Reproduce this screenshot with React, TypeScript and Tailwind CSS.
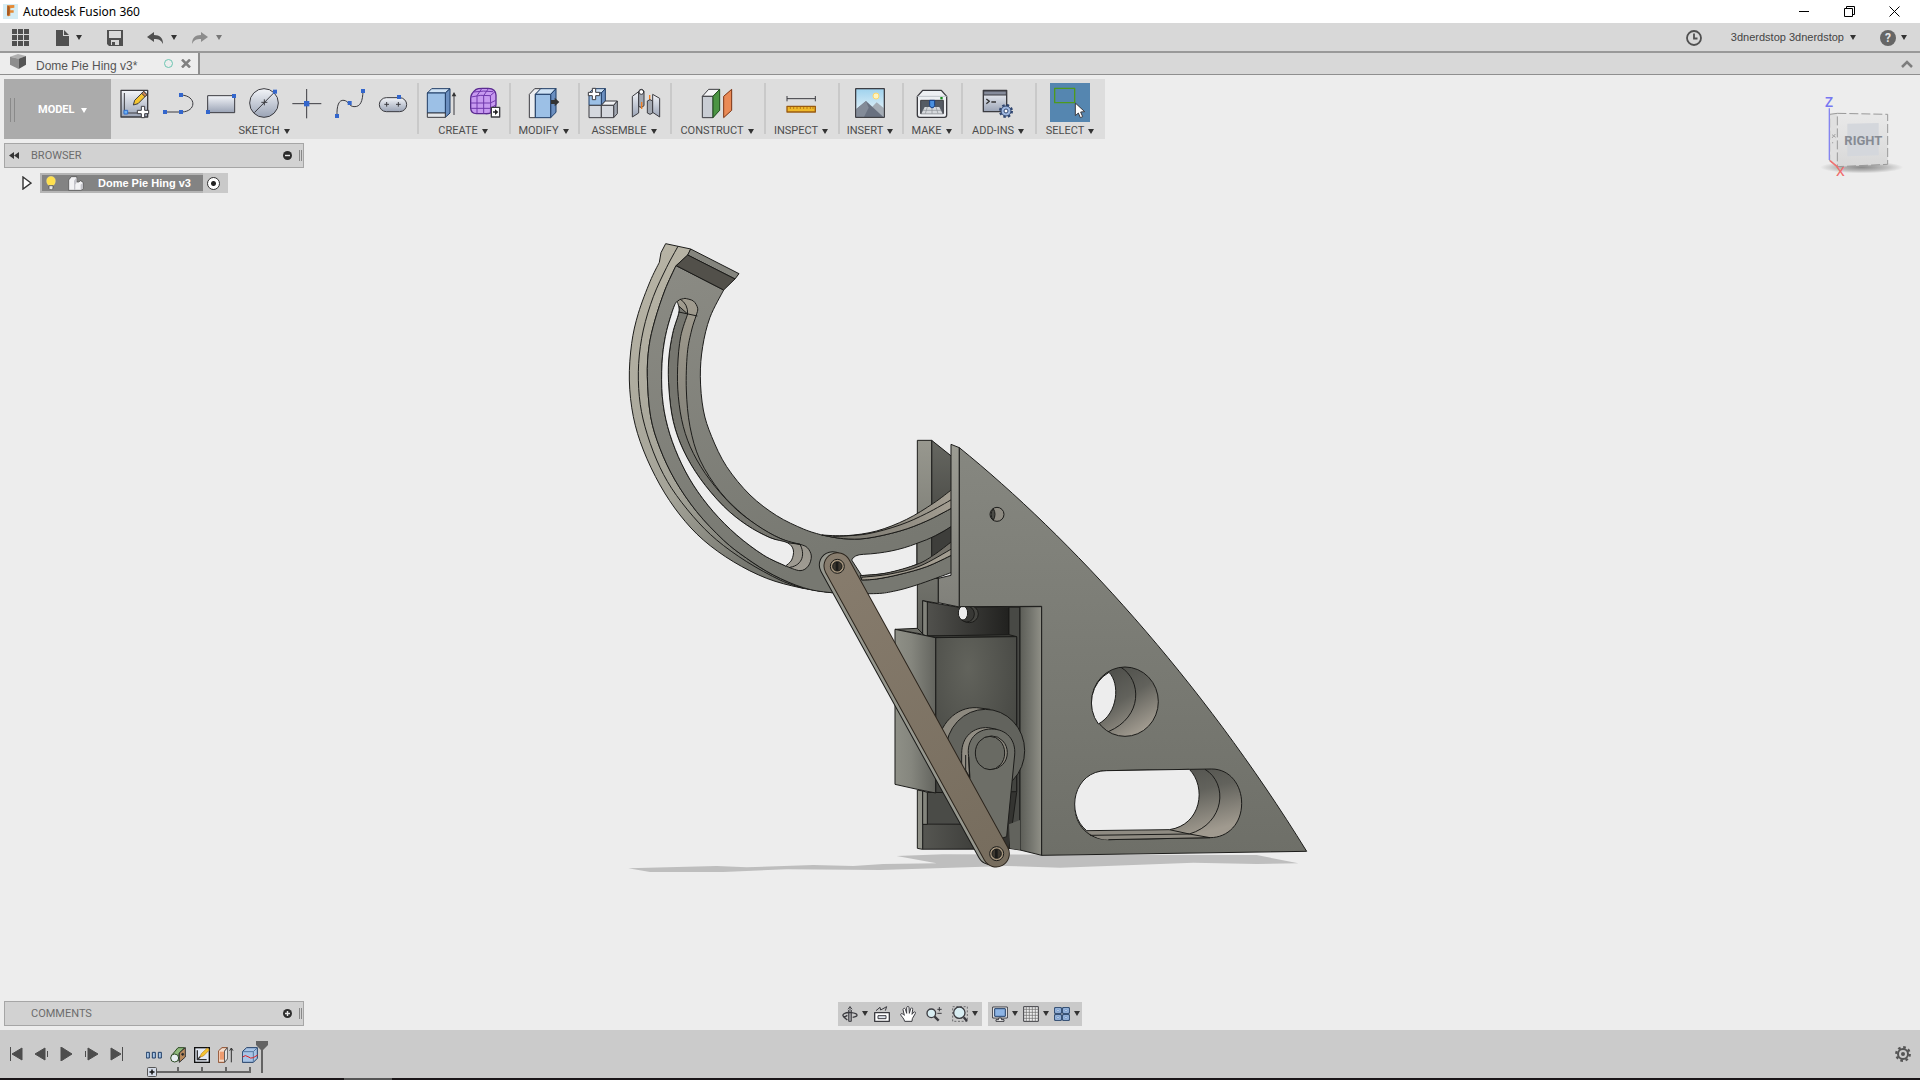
// Fusion 360 — MODEL workspace
import type { ReactNode } from "react"

type Pt = [number, number]

// smooth path through a list of points
function curve(pts: Pt[], start = "M") {
  let d = `${start}${pts[0][0]} ${pts[0][1]}`
  for (let i = 0; i < pts.length - 1; i++) {
    const p0 = pts[i - 1] ?? pts[i]
    const p1 = pts[i]
    const p2 = pts[i + 1]
    const p3 = pts[i + 2] ?? p2
    d += ` C${p1[0] + (p2[0] - p0[0]) / 6} ${p1[1] + (p2[1] - p0[1]) / 6} ${p2[0] - (p3[0] - p1[0]) / 6} ${p2[1] - (p3[1] - p1[1]) / 6} ${p2[0]} ${p2[1]}`
  }
  return d
}

const ringOuter: Pt[] = [[178, 97], [150, 155], [115, 250], [95, 340], [88, 450], [100, 560], [130, 660], [180, 765], [240, 855], [310, 930], [400, 995], [500, 1045], [600, 1073], [695, 1088]]
const ringMid: Pt[] = [[234, 49], [200, 112], [160, 200], [130, 300], [116, 400], [118, 500], [135, 590], [170, 690], [215, 775], [280, 860], [350, 930], [440, 995], [540, 1050], [610, 1075]]
const faceOuter: Pt[] = [[228, 107], [195, 180], [165, 270], [147, 350], [142, 440], [152, 560], [180, 655], [225, 750], [290, 845], [370, 930], [440, 985], [520, 1035], [610, 1073], [695, 1088], [820, 1091], [880, 1084], [950, 1065], [1056, 1027]]
const faceInner: Pt[] = [[665, 915], [610, 897], [530, 857], [450, 795], [380, 710], [335, 620], [310, 540], [301, 440], [308, 350], [330, 262], [371, 180]]
const slotOuter: Pt[] = [[255, 205], [232, 214], [215, 250], [196, 320], [186, 400], [187, 500], [203, 590], [235, 680], [280, 765], [340, 845], [410, 915], [490, 975], [557, 1008]]
const slotInner: Pt[] = [[557, 1008], [600, 1022], [625, 1008], [634, 978], [622, 953], [600, 943], [565, 935], [500, 905], [430, 855], [360, 785], [300, 690], [270, 590], [259, 480], [262, 370], [275, 300], [288, 258], [293, 235], [280, 213], [255, 205]]
const slotMid: Pt[] = [[263, 252], [242, 320], [233, 410], [235, 500], [250, 590], [280, 670], [330, 750], [400, 830], [470, 885], [540, 925], [600, 943]]
const gapLeft: Pt[] = [[236, 228], [229, 216], [215, 250], [196, 320], [186, 400], [187, 500], [203, 590], [235, 680], [280, 765], [340, 845], [410, 915], [490, 975], [557, 1008]]
const gapRight: Pt[] = [[557, 1008], [575, 990], [580, 960], [562, 938], [510, 923], [440, 885], [370, 828], [300, 745], [250, 660], [220, 575], [207, 480], [206, 390], [218, 310], [236, 250], [236, 228]]
const topOuter: Pt[] = [[665, 915], [740, 917], [830, 903], [920, 868], [1000, 820], [1056, 778]]
const topFace: Pt[] = [[1056, 834], [980, 873], [900, 903], [800, 925], [730, 926], [665, 915]]

function Model() {
  return (
    <svg className="pointer-events-none absolute inset-0 h-full w-full" viewBox="0 75 1920 955" aria-label="Dome Pie Hing model" role="img">
      <defs>
        <linearGradient id="plate" x1="0" y1="0" x2="0" y2="1"><stop offset="0" stopColor="#868780" /><stop offset="1" stopColor="#6e6f68" /></linearGradient>
        <linearGradient id="edge" x1="0" y1="0" x2="0" y2="1"><stop offset="0" stopColor="#9c9c93" /><stop offset="1" stopColor="#80807a" /></linearGradient>
        <linearGradient id="post" x1="0" y1="0" x2="0" y2="1"><stop offset="0" stopColor="#98988f" /><stop offset="1" stopColor="#62635d" /></linearGradient>
        <linearGradient id="back" x1="0" y1="0" x2="0" y2="1"><stop offset="0" stopColor="#666761" /><stop offset="1" stopColor="#353532" /></linearGradient>
        <linearGradient id="column" x1="0" y1="0" x2="1" y2="0"><stop offset="0" stopColor="#5c5d57" /><stop offset="0.5" stopColor="#74756e" /><stop offset="1" stopColor="#909087" /></linearGradient>
        <linearGradient id="recess" x1="0" y1="0" x2="1" y2="0"><stop offset="0" stopColor="#51514d" /><stop offset="1" stopColor="#21211f" /></linearGradient>
        <linearGradient id="servo" x1="0" y1="0" x2="1" y2="0"><stop offset="0" stopColor="#8f9087" /><stop offset="0.4" stopColor="#85867e" /><stop offset="1" stopColor="#63645e" /></linearGradient>
        <radialGradient id="servoFace" cx="0.4" cy="0.2" r="0.8"><stop offset="0" stopColor="#62635c" /><stop offset="1" stopColor="#434440" /></radialGradient>
        <linearGradient id="bore" x1="0" y1="0" x2="0.6" y2="1"><stop offset="0" stopColor="#474844" /><stop offset="0.55" stopColor="#62625c" /><stop offset="1" stopColor="#a09a8f" /></linearGradient>
        <linearGradient id="face" x1="0" y1="0" x2="0.3" y2="1"><stop offset="0" stopColor="#8b8b84" /><stop offset="1" stopColor="#777871" /></linearGradient>
        <linearGradient id="rim" x1="0" y1="0" x2="0.4" y2="1"><stop offset="0" stopColor="#b9b5a6" /><stop offset="0.7" stopColor="#a4a398" /><stop offset="1" stopColor="#75766f" /></linearGradient>
        <linearGradient id="wall" x1="0" y1="0" x2="0" y2="1"><stop offset="0" stopColor="#a19c8f" /><stop offset="0.6" stopColor="#7e7d75" /><stop offset="1" stopColor="#a09c93" /></linearGradient>
        <linearGradient id="upper" x1="0" y1="0" x2="1" y2="0"><stop offset="0" stopColor="#6f6e67" /><stop offset="1" stopColor="#a49e92" /></linearGradient>
        <linearGradient id="link" gradientUnits="userSpaceOnUse" x1="700" y1="60" x2="1188" y2="940"><stop offset="0" stopColor="#877c6d" /><stop offset="1" stopColor="#776d5e" /></linearGradient>
      </defs>

      {/* mount, servo pocket */}
      <g transform="translate(860 420) scale(0.33333)" stroke="#1b1b19" strokeWidth="3" strokeLinejoin="round">
        <path stroke="none" fill="#bebebe" d="M-695 1345 L-430 1338 L-340 1342 L-140 1335 L-20 1338 L70 1332 L230 1330 L110 1308 L250 1303 L1190 1305 L1315 1330 L1190 1332 L1000 1328 L600 1343 L440 1338 L60 1350 L-220 1348 L-410 1356 L-630 1356 Z" />
        <path fill="url(#back)" d="M215 61 L275 109 V400 L235 475 H215 Z" />
        <path fill="url(#post)" d="M172 61 H215 V475 H235 V550 L188 542 V640 L172 634 Z" />
        <path fill="url(#recess)" d="M202 546 L298 562 H447 V648 H202 Z" />
        <path fill="#82837b" d="M188 542 L202 546 V648 L188 644 Z" />
        <ellipse cx="328" cy="582" rx="27" ry="26" fill="#454541" />
        <ellipse cx="320" cy="582" rx="23" ry="24" fill="#383835" />
        <ellipse cx="309" cy="579" rx="14" ry="21" fill="#ededed" />
        <path fill="#484945" d="M447 562 H480 V1290 L447 1285 Z" />
        <path fill="#343431" d="M202 648 L225 652 H470 V1117 L447 1285 L345 1287 H188 V1117 H227 Z" />
        <path fill="#3c3d39" d="M202 648 L447 644 L470 650 L227 653 Z" />
        <path fill="url(#servoFace)" d="M227 653 L470 650 V1115 L227 1119 Z" />
        <path fill="#4a4b47" d="M202 1117 L350 1119 V1213 H202 Z" />
        <path fill="#5a5b56" d="M188 1213 H350 V1287 H188 Z" />
        <path fill="url(#recess)" opacity="0.5" stroke="none" d="M188 1213 H350 V1287 H188 Z" />
        <path fill="#92938a" d="M172 1110 L188 1113 V1288 L172 1285 Z" />
        <path fill="#84857d" d="M188 1113 L202 1117 V1213 H188 Z" />
        <path fill="#6c6d66" d="M105 628 L172 625 L190 643 Z" />
        <path fill="url(#servo)" d="M105 628 L188 645 L227 653 V1119 L172 1108 L105 1093 Z" />
        <path fill="url(#column)" d="M480 560 H545 V1306 L480 1290 Z" />
        <path fill="#62635d" d="M447 1213 L480 1200 V1290 L450 1285 Z" stroke="none" />
      </g>

      {/* hinge ring */}
      <g transform="translate(600 230) scale(0.33333)" fill="none" stroke="#1b1b19" strokeWidth="3" strokeLinejoin="round">
        <path fill="url(#rim)" d={`M272 57 L197 41 L183 68 ${curve(ringOuter, "L")} ${curve([...faceOuter.slice(0, 14)].reverse(), "L")} L266 73 Z`} />
        <path d={curve(ringMid)} />
        <path fill="url(#face)" d={`${curve(faceOuter)} L1056 834 ${curve(topFace, "L")} ${curve(faceInner, "L")} Z`} />
        <path fill="url(#upper)" d={`${curve(topOuter)} ${curve(topFace, "L")} Z`} />
        <path d={curve([[1056, 808], [980, 850], [900, 885], [800, 912], [700, 919]])} />
        <path fill="#85857e" d="M272 57 L417 131 L405 147 L263 75 Z" />
        <path fill="#52504a" d="M263 75 L405 147 L371 180 L229 107 Z" />
        <path fill="url(#wall)" d={`${curve(slotOuter)} ${curve(slotInner, "L")} Z`} />
        <path fill="#76766f" d={`${curve(slotMid)} ${curve(gapRight.slice(3), "L")} Z`} />
        <path fill="#ededed" d={`${curve(gapLeft)} ${curve(gapRight, "L")} Z`} />
        <path d="M236 246 L292 258 M240 207 Q264 222 263 252 M600 943 C615 970 610 1005 570 1012" />

        {/* slot past the linkage pin */}
        <path fill="#ededed" d="M755 990 Q762 974 790 973 C850 970 900 960 951 940 V1003 C900 1025 850 1034 785 1037 Z" />
        <path stroke="none" fill="#73746d" d="M951 940 L995 922 V985 L951 1003 Z" />
        <path stroke="none" fill="#3e3e3b" d="M995 922 L1056 888 V940 L995 980 Z" />
        <path d="M951 940 V1003 M995 922 V980 M951 940 Q1010 920 1056 888" />
        <path fill="#75726a" d={`${curve([[780, 1037], [860, 1029], [951, 1003], [1000, 976], [1056, 934]])} ${curve([[1056, 975], [980, 1010], [900, 1033], [830, 1047], [785, 1050]], "L")} Z`} />
        <path fill="#a29c90" d={`${curve([[785, 1042], [870, 1032], [960, 1008], [1056, 956]])} ${curve([[1056, 975], [980, 1010], [900, 1033], [830, 1047], [785, 1050]], "L")} Z`} />
      </g>

      {/* front plate */}
      <g transform="translate(860 420) scale(0.33333)" stroke="#1b1b19" strokeWidth="3" strokeLinejoin="round">
        <path fill="url(#edge)" d="M273 73 L298 83 V561 L235 548 V475 L273 466 Z" />
        <path fill="url(#plate)" d="M298 83 C630 352 1020 775 1340 1294 L545 1306 V559 L298 560 Z" />
        <circle cx="411" cy="283" r="21" fill="#8d8a81" />
        <path fill="#4b4b46" d="M400 266 Q410 282 400 301 Q386 283 400 266 Z" />
        <ellipse cx="795" cy="845" rx="100" ry="104" fill="url(#bore)" />
        <path fill="none" d="M783 742 C845 780 850 890 745 935" />
        <path fill="#ededed" d="M747 757 C780 790 775 880 715 912 A100 104 0 0 1 747 757 Z" />
        <path fill="url(#bore)" d="M740 1052 L1055 1047 C1110 1047 1145 1095 1145 1150 C1145 1210 1105 1253 1050 1253 L745 1259 C685 1259 645 1215 645 1160 C645 1095 690 1052 740 1052 Z" />
        <path fill="#8f8b82" stroke="none" d="M680 1232 L925 1229 L1050 1253 L745 1259 Q710 1259 680 1232 Z" />
        <path fill="none" d="M1035 1048 C1105 1090 1095 1210 988 1242 M690 1246 L988 1242 L1050 1253 M928 1229 L988 1242 M745 1259 L1050 1253" />
        <path fill="#ededed" d="M740 1052 L988 1048 C1040 1100 1025 1215 928 1229 L680 1232 C615 1180 640 1052 740 1052 Z" />
      </g>

      {/* servo horn and linkage */}
      <g transform="translate(600 540) scale(0.33333)" fill="none" stroke="#1b1b19" strokeWidth="3" strokeLinejoin="round">
        <path fill="#8d897f" d="M1010 630 C1015 550 1070 500 1130 503 L1170 508 L1100 750 H1060 Z" />
        <ellipse cx="1156" cy="632" rx="118" ry="124" fill="#62635d" />
        <path fill="#918d83" d="M1085 640 C1085 590 1120 560 1165 563 L1190 568 L1110 710 L1085 690 Z" />
        <path fill="#6d6e67" d="M1106 650 C1098 600 1130 567 1174 567 C1220 567 1248 600 1244 645 L1220 890 L1190 900 L1110 750 Z" />
        <path d="M1097 645 V690 L1108 710 M1106 650 L1110 715" />
        <ellipse cx="1175" cy="638" rx="47" ry="50" fill="#8d897f" />
        <ellipse cx="1170" cy="639" rx="44" ry="50" fill="#696a63" />
        <path strokeWidth="83" strokeLinecap="round" d="M698 75 L1172 934" />
        <path strokeWidth="77" strokeLinecap="round" stroke="#96978e" d="M698 75 L1172 934" />
        <path strokeWidth="83" strokeLinecap="round" stroke="#2b241c" d="M712 78 L1188 941" />
        <path strokeWidth="77" strokeLinecap="round" stroke="url(#link)" d="M712 78 L1188 941" />
        <circle cx="712" cy="79" r="21" fill="#a8977f" />
        <circle cx="712" cy="79" r="14" fill="#3c372f" />
        <path strokeWidth="8" d="M711 66 V92" />
        <circle cx="1190" cy="941" r="21" fill="#a8977f" />
        <circle cx="1190" cy="941" r="14" fill="#3c372f" />
        <path strokeWidth="8" d="M1189 928 V954" />
      </g>
    </svg>
  )
}

function ViewCube() {
  return (
    <svg className="mt-4 mr-4 h-[90px] w-[84px] shrink-0" viewBox="480 273 252 270" aria-label="View cube: right" role="img">
      <defs>
        <radialGradient id="cubeShadow"><stop offset="0" stopColor="#8a8a8a" /><stop offset="0.6" stopColor="#bdbdbd" /><stop offset="1" stopColor="#ededed" /></radialGradient>
        <linearGradient id="cubeFace" x1="0" y1="0" x2="0" y2="1"><stop offset="0" stopColor="#e9e9e9" /><stop offset="1" stopColor="#d8d8d8" /></linearGradient>
      </defs>
      <ellipse cx="605" cy="502" rx="125" ry="18" fill="url(#cubeShadow)" />
      <path d="M509 343 L532 340 V500 L509 482 Z" fill="#e0e0e0" />
      <path d="M532 340 L683 343 V493 L532 500 Z" fill="url(#cubeFace)" />
      <path d="M562 371 L656 369 V466 L562 469 Z" fill="#d4d7dc" />
      <path d="M532 340 L683 343 V493 L532 500 Z M532 340 L509 343 V482 L532 500" fill="none" stroke="#999" strokeWidth="3" strokeDasharray="27 9" />
      <path d="M508 325 V480" stroke="#8585f0" strokeWidth="4" />
      <path d="M510 482 L534 502" stroke="#f07070" strokeWidth="5" />
      <path d="M516 404 L527 412 M516 414 L526 402 M518 426 V430" stroke="#a5a5a5" strokeWidth="3" />
      <text x="610" y="435" textAnchor="middle" className="fill-[#868b93] font-['Roboto',sans-serif] text-[39px] font-bold">RIGHT</text>
      <text x="507" y="321" textAnchor="middle" className="fill-[#7676f2] font-['Open_Sans',sans-serif] text-[42px] font-semibold">Z</text>
      <text x="541" y="528" textAnchor="middle" className="fill-[#ef6c6c] font-['Open_Sans',sans-serif] text-[40px] font-semibold">X</text>
    </svg>
  )
}

function Caret({ className = "text-[#333]" }: { className?: string }) {
  return <svg className={`h-[5px] w-[6px] shrink-0 ${className}`} viewBox="0 0 6 5"><path d="M0 0 H6 L3 5 Z" fill="currentColor" /></svg>
}

// 32px tool artwork on a 96 unit grid
function Art({ children }: { children: ReactNode }) {
  return <svg className="h-8 w-8" viewBox="0 0 96 96" fill="none" stroke="#3b3b40" strokeWidth="3" strokeLinejoin="round">{children}</svg>
}

function Dot({ x, y }: { x: number; y: number }) {
  return <rect x={x - 6} y={y - 6} width="12" height="12" fill="#3366cc" stroke="none" />
}

const sketchTools = [
  { name: "Create Sketch", art: <><rect x="6" y="10" width="80" height="80" fill="url(#steel)" strokeWidth="4" /><path d="M16 18 V78 H60" /><rect x="15" y="70" width="11" height="11" fill="#6fb2f0" stroke="#2e6fd0" /><path d="M43 54 L47 40 L74 13 L84 23 L57 50 Z" fill="#f5c531" /><path d="M68 19 L74 13 L84 23 L78 29 Z" fill="#c98658" /><path d="M67 58 H77 V70 H89 V80 H77 V92 H67 V80 H55 V70 H67 Z" fill="#fff" /></> },
  { name: "Line", art: <><path d="M9 75 H60 C104 73 104 26 57 24" /><Dot x={9} y={75} /><Dot x={57} y={75} /><Dot x={57} y={24} /></> },
  { name: "Rectangle", art: <><rect x="8" y="26" width="81" height="51" fill="url(#steel)" /><Dot x={87} y={27} /><Dot x={9} y={75} /></> },
  { name: "Circle", art: <><circle cx="48" cy="48" r="43" fill="url(#steel)" /><path d="M19 77 L81 14 M40 46 H58 M49 37 V55" /><Dot x={81} y={14} /></> },
  { name: "Point", art: <><path d="M4 50 H91 M47 6 V94" /><rect x="39" y="42" width="16" height="16" fill="#3366cc" stroke="none" /></> },
  { name: "Spline", art: <><path d="M9 87 C8 56 14 38 30 40 C44 42 44 58 60 59 C80 60 86 42 87 12" /><Dot x={9} y={87} /><Dot x={47} y={48} /><Dot x={87} y={12} /></> },
  { name: "Slot", art: <><rect x="7" y="32" width="82" height="42" rx="21" fill="url(#steel)" /><path d="M22 52 H36 M29 45 V59 M57 52 H71 M64 45 V59" /><Dot x={66} y={30} /></> },
]

const createTools = [
  { name: "Extrude", art: <><path d="M4 18 L17 5 H72 L58 18 Z" fill="#cfe2f4" stroke="#1f3d66" /><path d="M58 18 L72 5 V78 L58 91 Z" fill="#6b8fc0" stroke="#1f3d66" /><path d="M4 18 H58 V78 H4 Z" fill="#9cc0e6" stroke="#1f3d66" /><path d="M4 78 H58 V91 H4 Z" fill="#e3e6ea" /><path d="M84 84 V20" /><path d="M77 28 L84 15 L91 28 Z" fill="#333" stroke="none" /></> },
  { name: "Create Form", art: <><path d="M5 36 Q4 20 20 8 Q26 4 40 4 H58 Q80 5 81 24 V52 Q80 66 68 76 Q62 81 48 80 H22 Q6 80 5 64 Z" fill="#c79af0" stroke="#5a2a90" strokeWidth="4" /><path d="M6 30 Q36 22 64 26 Q66 50 64 78 M14 15 Q45 10 72 14 M6 48 H64 L80 40 M6 64 H64 L80 54 M24 26 V79 M44 26 V80 M24 26 L38 5 M44 26 L58 5 M64 26 L78 14" stroke="#7038ad" /><rect x="67" y="61" width="25" height="29" fill="#fff" strokeWidth="4" /><path d="M72 75 H80" strokeWidth="5" /><path d="M78 67 L88 75 L78 84 Z" fill="#222" stroke="none" /></> },
]

const modifyTools = [
  { name: "Press Pull", art: <><path d="M4 22 L20 5 H40 L22 22 V92 H4 Z" fill="#eceef1" /><path d="M22 22 L38 5 H84 L68 22 Z" fill="#cfe2f4" stroke="#1f3d66" /><path d="M68 22 L84 5 V76 L68 92 Z" fill="#6b8fc0" stroke="#1f3d66" /><path d="M22 22 H68 V92 H22 Z" fill="#9cc0e6" stroke="#1f3d66" /><path d="M69 39 H80 V32 L94 45 L80 58 V51 H69 Z" fill="#333" stroke="none" /></> },
]

const assembleTools = [
  { name: "New Component", art: <><path d="M6 18 L20 5 H55 L43 18 Z" fill="#cfe2f4" stroke="#1f3d66" /><path d="M43 18 L55 5 V42 L43 55 Z" fill="#6b8fc0" stroke="#1f3d66" /><path d="M6 18 H43 V55 H6 Z" fill="#9cc0e6" stroke="#1f3d66" /><path d="M6 55 H43 V92 H6 Z" fill="#d5d8de" /><path d="M43 55 L55 42 H91 L80 55 Z" fill="#f2f3f5" /><path d="M80 55 L91 42 V80 L80 92 Z" fill="#a2a8b2" /><path d="M43 55 H80 V92 H43 Z" fill="#d5d8de" /><path d="M16 4 H26 V16 H38 V26 H26 V38 H16 V26 H4 V16 H16 Z" fill="#fff" /></> },
  { name: "Joint", art: <><path d="M7 28 L26 14 V78 L7 90 Z" fill="url(#steel)" /><path d="M26 12 Q34 2 42 12 V56 Q34 66 26 58 Z" fill="#a4a9b2" /><circle cx="34" cy="15" r="7" fill="#fff" /><path d="M35 45 V66 M59 24 V46" stroke="#f07e20" strokeWidth="4" /><path d="M52 42 Q60 34 68 42 V78 Q60 86 52 78 Z" fill="#a4a9b2" /><path d="M68 22 L89 34 V90 L68 76 Z" fill="url(#steel)" /></> },
]

const constructTools = [
  { name: "Offset Plane", art: <><path d="M4 28 L23 7 H56 L36 28 Z" fill="#f4f4f6" /><path d="M4 28 H36 V92 H4 Z" fill="#c9cdd4" /><path d="M36 28 L56 7 V70 L36 92 Z" fill="#4b9443" stroke="#1d4d1a" /><path d="M68 28 L92 7 V70 L68 92 Z" fill="#ea8a56" stroke="#7c3413" /></> },
]

const inspectTools = [
  { name: "Measure", art: <><path d="M6 35 H91 M6 27 V43 M91 27 V43" /><rect x="6" y="58" width="85" height="17" fill="#efb929" stroke="#9a5b10" strokeWidth="4" /><path d="M16 58 V66 M26 58 V66 M36 58 V66 M46 58 V66 M56 58 V66 M66 58 V66 M76 58 V66 M84 58 V66" stroke="#9a5b10" strokeWidth="2" /></> },
]

const insertTools = [
  { name: "Insert Image", art: <><rect x="5" y="5" width="86" height="86" fill="url(#sky)" /><circle cx="66" cy="27" r="9" fill="#fff4bf" stroke="#ffd76b" /><path d="M46 68 L68 46 L90 64 V90 H46 Z" fill="#a4acb5" stroke="none" /><path d="M7 66 L36 42 L88 90 H7 Z" fill="#697180" stroke="none" /><path d="M7 66 L36 42 L44 62 L30 90 H7 Z" fill="#838b98" stroke="none" /><rect x="5" y="5" width="86" height="86" /></> },
]

const makeTools = [
  { name: "3D Print", art: <><path d="M4 28 L20 10 H76 L92 28 V84 Q92 91 85 91 H11 Q4 91 4 84 Z" fill="#eef0f3" strokeWidth="4" /><path d="M4 28 H92" stroke="#c0c4ca" /><rect x="14" y="40" width="68" height="40" fill="#555b64" /><path d="M26 60 H70 L80 80 H16 Z" fill="#d6d9dd" stroke="none" /><path d="M34 60 L28 80 M48 60 V80 M60 60 L66 80 M20 70 H76" stroke="#8c9096" strokeWidth="2" /><path d="M41 40 H56 V56 L52 62 H45 L41 56 Z" fill="#4a90e0" stroke="#163f86" /><rect x="73" y="30" width="7" height="7" fill="#128a1b" stroke="none" /></> },
]

const addinTools = [
  { name: "Scripts and Add-Ins", art: <><rect x="4" y="10" width="70" height="64" fill="url(#steel)" strokeWidth="4" /><path d="M5 12 H73 V24 H5 Z" fill="#858b9b" /><path d="M13 36 L22 43 L13 50 M28 45 H42" stroke="#333" strokeWidth="4" /><circle cx="72" cy="72" r="17" stroke="#2f456f" strokeWidth="8" strokeDasharray="7 6.4" /><circle cx="72" cy="72" r="15" fill="#9fb8e0" stroke="#2f456f" /><circle cx="72" cy="72" r="6" fill="#fff" stroke="#2f456f" /></> },
]

const selectTools = [
  { name: "Select", active: true, art: <><path d="M2 4 H62 V47 H2 Z" stroke="#4e9a1d" strokeWidth="4" /><path d="M64 48 V86 L73 78 L79 92 L86 89 L80 75 L92 74 Z" fill="#fff" /></> },
]

type Tool = { name: string; art: ReactNode; active?: boolean }

const groups: { label: string; tools: Tool[]; width: string }[] = [
  { label: "SKETCH", tools: sketchTools, width: "w-[306px]" },
  { label: "CREATE", tools: createTools, width: "w-[92px]" },
  { label: "MODIFY", tools: modifyTools, width: "w-[69px]" },
  { label: "ASSEMBLE", tools: assembleTools, width: "w-[92px]" },
  { label: "CONSTRUCT", tools: constructTools, width: "w-[94px]" },
  { label: "INSPECT", tools: inspectTools, width: "w-[74px]" },
  { label: "INSERT", tools: insertTools, width: "w-[64px]" },
  { label: "MAKE", tools: makeTools, width: "w-[59px]" },
  { label: "ADD-INS", tools: addinTools, width: "w-[74px]" },
  { label: "SELECT", tools: selectTools, width: "w-[70px]" },
]

function Toolbar() {
  return (
    <div className="flex h-[60px] w-max bg-[#dddddd]">
      <svg className="absolute h-0 w-0" aria-hidden="true">
        <defs>
          <linearGradient id="steel" x1="0" y1="0" x2="0" y2="1"><stop offset="0" stopColor="#f3f5f9" /><stop offset="1" stopColor="#9aa3b5" /></linearGradient>
          <linearGradient id="sky" x1="0" y1="0" x2="0" y2="1"><stop offset="0" stopColor="#9fd2ee" /><stop offset="1" stopColor="#f2f9fb" /></linearGradient>
        </defs>
      </svg>
      <button type="button" className="flex w-[107px] items-center bg-[#ababab] pt-0.5 pl-1.5 text-[11px] font-bold text-white">
        <span className="h-6 w-[5px] border-x border-[#8a8a8a]" />
        <span className="mr-1.5 ml-[23px]">MODEL</span>
        <Caret className="text-white" />
      </button>
      {groups.map((g, i) => (
        <div key={g.label} className={`flex flex-col items-center pt-1 ${g.width}`}>
          <div className="flex w-full items-start">
            <div className="flex flex-1 justify-center">
              {g.tools.map(t => (
                <button key={t.name} type="button" aria-label={t.name} className={`flex h-[39px] items-center justify-center ${t.active ? "w-10 bg-[#5586b0]" : "w-[43px]"}`}>
                  <Art>{t.art}</Art>
                </button>
              ))}
            </div>
            {i < groups.length - 1 && <span className="-mr-0.5 -mb-4 h-[51px] w-0.5 bg-[#c9c9c9]" />}
          </div>
          <button type="button" className="flex h-[17px] items-center gap-1 pt-px text-[11px] leading-4 text-[#4c4c4c]">
            {g.label}
            <Caret />
          </button>
        </div>
      ))}
    </div>
  )
}

function SidePanel({ title, open }: { title: string; open: boolean }) {
  return (
    <div className="flex h-[25px] w-[300px] items-center border border-[#a6a6a6] bg-[#d2d2d2] text-[11px] text-[#6c6c6c]">
      <span className="flex w-[26px] pl-1">
        {open && <svg className="h-[7px] w-[10px]" viewBox="0 0 10 7"><path d="M5 0 V7 L0 3.5 Z M10 0 V7 L5 3.5 Z" fill="#333" /></svg>}
      </span>
      <h2 className="flex-1 pt-0.5">{title}</h2>
      <button type="button" aria-label={open ? `Collapse ${title}` : `Expand ${title}`}>
        <svg className="h-[9px] w-[9px]" viewBox="0 0 9 9"><circle cx="4.5" cy="4.5" r="4.5" fill="#2d2d2d" /><path d={open ? "M2 4.5 H7" : "M2 4.5 H7 M4.5 2 V7"} stroke="#e8e8e8" strokeWidth="1.4" /></svg>
      </button>
      <span className="mr-px ml-[7px] h-[11px] w-[3px] border-x border-[#888]" />
    </div>
  )
}

const playback = [
  { name: "Go to start", d: "M0.5 0 V14 M12 1 V13 L2 7 Z" },
  { name: "Step back", d: "M10 1 V13 L0 7 Z M12.5 4 V10" },
  { name: "Play", d: "M1 0 L12 7 L1 14 Z" },
  { name: "Step forward", d: "M0.5 4 V10 M3 1 L13 7 L3 13 Z" },
  { name: "Go to end", d: "M1 1 L11 7 L1 13 Z M12.5 0 V14" },
]

const features = [
  { name: "Component group", art: <path d="M1 16 H10 V33 H1 Z M19 16 H28 V33 H19 Z M37 16 H46 V33 H37 Z" fill="#a9c6e6" stroke="#1f3d66" /> },
  { name: "Combine", art: <><path d="M4 26 L24 2 H44 L28 18 L24 42 Z" fill="#8fb97c" stroke="#2c4a24" /><path d="M28 18 L46 2 V30 L28 46 Z" fill="#b98a5c" /><circle cx="14" cy="33" r="12" fill="#e8eef2" stroke="#2c4a24" /><circle cx="38" cy="22" r="3" fill="#222" /></> },
  { name: "Sketch", art: <><rect x="2" y="2" width="44" height="44" fill="#e4eaf4" stroke="#111" strokeWidth="4" /><path d="M10 10 V38 H38 M10 38 L20 28" strokeWidth="4" /><path d="M18 30 L22 20 L40 3 L46 9 L28 27 Z" fill="#f5c531" stroke="#b97d14" strokeWidth="2" /></> },
  { name: "Extrude", art: <><path d="M1 12 L12 2 H28 L20 12 V46 H1 Z" fill="#f4dccb" stroke="#8c4a28" /><path d="M20 12 L28 2 V36 L20 46 Z" fill="#fff" stroke="#555" /><path d="M5 14 H18 V38 H5 Z" fill="#ee9c70" stroke="none" /><path d="M40 46 V4 M35 11 L40 3 L45 11" /></> },
  { name: "Split", art: <><path d="M1 14 L14 2 H46 V34 L34 46 H1 Z" fill="#a8c4e6" stroke="#1f3d66" /><path d="M1 14 H34 L46 2 M34 14 V46" stroke="#56779f" /><path d="M2 30 Q10 22 18 29 T34 32 L47 24" stroke="#e02020" /></> },
]

function NavButton({ name, caret, children }: { name: string; caret?: boolean; children: ReactNode }) {
  return (
    <button type="button" aria-label={name} className={`flex h-6 items-center gap-1 ${caret ? "-mr-1" : ""}`}>
      <svg className="h-4 w-4" viewBox="0 0 48 48" fill="none" stroke="#3b3b40" strokeWidth="3" strokeLinejoin="round">{children}</svg>
      {caret && <Caret />}
    </button>
  )
}

export default function App() {
  return (
    <div className="flex h-screen flex-col overflow-hidden bg-[#ededed] font-['Roboto','Liberation_Sans',sans-serif] text-[11px]">
      <header className="flex h-[23px] shrink-0 items-center bg-white pl-[3px]">
        <svg className="h-[15px] w-[15px]" viewBox="0 0 45 45"><rect width="45" height="45" fill="#d5edf5" /><path d="M13 4 L34 3 V11 L22 13 V19 H32 V26 H22 V35 L15 37 L12 32 Z" fill="#e58a35" /><path d="M13 4 L20 8 V30 L15 37 L12 32 Z" fill="#a85b22" /></svg>
        <h1 className="ml-[5px] flex-1 font-['Noto_Sans','Open_Sans',sans-serif] text-[12px] leading-4 text-black">Autodesk Fusion 360</h1>
        <button type="button" aria-label="Minimize" className="flex w-[45px] justify-center"><svg className="h-[11px] w-[11px]" viewBox="0 0 11 11"><path d="M0 5.5 H10" stroke="#000" /></svg></button>
        <button type="button" aria-label="Restore" className="flex w-[45px] justify-center"><svg className="h-[11px] w-[11px]" viewBox="0 0 11 11" fill="none" stroke="#000"><path d="M0.5 2.5 H8.5 V10.5 H0.5 Z M2.5 2.5 V0.5 H10.5 V8.5 H8.5" /></svg></button>
        <button type="button" aria-label="Close" className="mr-[3px] flex w-[45px] justify-center"><svg className="h-[11px] w-[11px]" viewBox="0 0 11 11"><path d="M0.5 0.5 L10.5 10.5 M10.5 0.5 L0.5 10.5" stroke="#000" /></svg></button>
      </header>

      <div className="flex h-[30px] shrink-0 items-center border-b-2 border-[#999] bg-[#d8d8d8] pt-px pl-3 text-[#505050]">
        <button type="button" aria-label="Data panel"><svg className="h-[17px] w-[17px]" viewBox="0 0 17 17"><path d="M0 0h5v5H0z M6 0h5v5H6z M12 0h5v5h-5z M0 6h5v5H0z M6 6h5v5H6z M12 6h5v5h-5z M0 12h5v5H0z M6 12h5v5H6z M12 12h5v5h-5z" fill="currentColor" /></svg></button>
        <button type="button" aria-label="File" className="ml-[27px] flex items-center gap-[7px]"><svg className="h-4 w-[13px]" viewBox="0 0 13 16"><path d="M0 0 H7 V6 H13 V16 H0 Z M8 0 L13 5 H8 Z" fill="currentColor" /></svg><Caret /></button>
        <button type="button" aria-label="Save" className="ml-[25px]"><svg className="h-4 w-4" viewBox="0 0 16 16"><path fillRule="evenodd" d="M0 0 H16 V16 H2 L0 14 Z M2 1 V8 H14 V1 Z M4 10 V15 H12 V10 Z" fill="currentColor" /><path d="M5 12 H8 V15 H5 Z" fill="currentColor" /></svg></button>
        <button type="button" aria-label="Undo" className="ml-6 flex items-center gap-2"><svg className="h-3 w-4" viewBox="0 0 16 12"><path d="M0 5 L7 0 V3 C13 3 16 6 16 12 C14 8 12 7 7 7 V10 Z" fill="currentColor" /></svg><Caret /></button>
        <button type="button" aria-label="Redo" className="ml-[15px] flex items-center gap-2 text-[#8c8c8c]"><svg className="h-3 w-4" viewBox="0 0 16 12"><path d="M16 5 L9 0 V3 C3 3 0 6 0 12 C2 8 4 7 9 7 V10 Z" fill="currentColor" /></svg><Caret className="text-[#777]" /></button>
        <button type="button" aria-label="Job status" className="ml-auto"><svg className="h-4 w-4" viewBox="0 0 16 16" fill="none" stroke="currentColor" strokeWidth="1.8"><circle cx="8" cy="8" r="7" /><path d="M8 3.5 V8.5 H11.5" /></svg></button>
        <button type="button" className="ml-[29px] flex items-center gap-1.5 font-['Liberation_Sans',sans-serif] text-[11px] text-[#444]">3dnerdstop 3dnerdstop<Caret /></button>
        <button type="button" aria-label="Help" className="mr-[13px] ml-6 flex items-center gap-[5px]"><span className="flex h-4 w-4 items-center justify-center rounded-full bg-[#666] text-[12px] leading-4 font-bold text-[#e5e5e5]">?</span><Caret /></button>
      </div>

      <div className="flex h-[22px] shrink-0 border-b border-[#8f8f8f] bg-[#d8d8d8]">
        <div className="flex w-[200px] items-center border-r-2 border-[#8f8f8f] bg-[#ededed] pl-2.5">
          <svg className="-mt-1 h-[15px] w-4" viewBox="0 0 48 45"><path d="M0 8 L24 0 L48 6 L26 14 Z" fill="#b0b0b0" /><path d="M0 8 L26 14 V45 L0 32 Z" fill="#8d8d8d" /><path d="M26 14 L48 6 V32 L26 45 Z" fill="#555" /></svg>
          <span className="ml-2.5 flex-1 pt-1 font-['Liberation_Sans',sans-serif] text-[12px] leading-4 text-[#555]">Dome Pie Hing v3*</span>
          <span className="h-[9px] w-[9px] rounded-full border border-[#6cc6b2]" />
          <button type="button" aria-label="Close tab" className="mr-[7px] ml-2"><svg className="h-[9px] w-[10px]" viewBox="0 0 10 9"><path d="M1 0.5 L9 8.5 M9 0.5 L1 8.5" stroke="#808080" strokeWidth="2.5" /></svg></button>
        </div>
        <button type="button" aria-label="Collapse toolbar" className="mr-[7px] ml-auto"><svg className="h-2 w-3" viewBox="0 0 12 8" fill="none"><path d="M1 7 L6 2 L11 7" stroke="#7d7d7d" strokeWidth="2.5" /></svg></button>
      </div>

      <main className="relative flex flex-1 flex-col">
        <Model />
        <div className="relative flex items-start justify-between">
          <div className="flex flex-col gap-1 pt-1 pl-1">
            <Toolbar />
            <SidePanel title="BROWSER" open />
            <div className="mt-px flex h-5 items-center pl-[18px]">
              <button type="button" aria-label="Expand component" className="w-[18px]"><svg className="h-[14px] w-[10px]" viewBox="0 0 10 14"><path d="M1 1 L9 7 L1 13 Z" fill="#fff" stroke="#333" strokeWidth="1.4" /></svg></button>
              <div className="flex h-5 items-center bg-[#c9c9c9] pr-2">
                <div className="flex h-5 items-center border-y-2 border-l-2 border-[#b5b5b5] bg-[#838383] pr-3">
                  <svg className="ml-1 h-[14px] w-[10px]" viewBox="0 0 30 42"><path d="M8 28 C-2 20 0 1 15 1 C30 1 32 20 22 28 Z" fill="#ffe04d" stroke="#fff3a0" /><path d="M9 29 H21 V37 L17 41 H13 L9 37 Z" fill="#e5e5e5" stroke="#444" strokeWidth="2" /></svg>
                  <svg className="ml-3 h-[15px] w-4" viewBox="0 0 48 45"><path d="M2 12 L10 2 H26 V18 H32 L38 14 L46 20 V38 L38 43 H2 Z" fill="#f2f2f4" stroke="#444" strokeWidth="2" /><path d="M18 14 L26 4 V20 L22 26 V42 H18 Z M38 26 L45 20 V37 L38 42 Z" fill="#c4c4ca" /></svg>
                  <span className="ml-[14px] font-['Liberation_Sans',sans-serif] text-[11px] font-bold text-white">Dome Pie Hing v3</span>
                </div>
                <label className="ml-1 flex">
                  <input type="radio" name="active-component" aria-label="Activate Dome Pie Hing v3" defaultChecked className="h-[13px] w-[13px] appearance-none rounded-full border border-[#333] bg-[radial-gradient(circle,#222_0_2px,#fff_3px)]" />
                </label>
              </div>
            </div>
          </div>
          <ViewCube />
        </div>

        <div className="relative mt-auto grid grid-cols-[1fr_auto_1fr] items-center px-1 pb-1">
          <SidePanel title="COMMENTS" open={false} />
          <nav aria-label="Navigation" className="flex gap-1.5">
            <div className="flex items-center gap-2.5 bg-[#c9c9c9] pr-2 pl-1">
              <NavButton name="Orbit" caret><path d="M24 2 V46 M18 10 L24 2 L30 10 M20 12 V46 H28 V12" fill="#fff" /><path d="M8 34 C-6 26 10 18 28 20 C50 22 50 32 32 34 M16 28 L6 34 L16 42" strokeWidth="4" /></NavButton>
              <NavButton name="Look at"><path d="M2 20 H46 V46 H2 Z" fill="#fff" strokeWidth="4" /><path d="M12 29 H36 V38 H12 Z" fill="#dfe3ea" /><path d="M6 14 L18 4 L20 12 L38 2 L34 14" /></NavButton>
              <NavButton name="Pan"><path d="M14 46 C12 36 2 30 2 25 C4 20 10 25 13 28 L9 11 C10 5 16 6 17 12 L20 22 V5 C21 0 27 0 27 5 L28 22 L32 8 C34 4 39 5 38 10 L36 25 L42 18 C46 16 48 20 45 24 L37 38 L36 46 Z" fill="#fff" /></NavButton>
              <NavButton name="Zoom"><circle cx="16" cy="22" r="13" fill="#d8edf2" strokeWidth="4" /><path d="M26 32 L38 44" strokeWidth="7" /><path d="M34 10 H47 M40 3 V16 M34 22 H47" /></NavButton>
              <NavButton name="Fit" caret><path d="M2 2 H46 V46 H2 Z" strokeDasharray="6 5" strokeWidth="2" /><circle cx="22" cy="20" r="17" fill="#d8edf2" strokeWidth="4" /><path d="M35 34 L45 45" strokeWidth="7" /></NavButton>
            </div>
            <div className="flex items-center gap-[9px] bg-[#c9c9c9] pr-1.5 pl-1">
              <NavButton name="Display settings" caret><path d="M2 3 H46 V36 H2 Z" fill="#fff" /><path d="M8 8 H40 V31 H8 Z" fill="#8db4e4" stroke="#1f3d66" /><path d="M20 36 V41 H12 V46 H36 V41 H28 V36 Z" fill="#fff" /></NavButton>
              <NavButton name="Grid and snaps" caret><path d="M2 2 H46 V46 H2 Z" fill="#eee" /><path d="M10 2 V46 M19 2 V46 M28 2 V46 M37 2 V46 M2 10 H46 M2 19 H46 M2 28 H46 M2 37 H46" strokeWidth="2" stroke="#666" /></NavButton>
              <NavButton name="Viewports" caret><path d="M2 5 H22 V22 H2 Z M26 5 H46 V22 H26 Z M2 26 H22 V43 H2 Z M26 26 H46 V43 H26 Z" fill="#a9c6ec" stroke="#1f3d66" /><path d="M8 11 H16 V16 H8 Z M32 11 H40 V16 H32 Z M8 32 H16 V37 H8 Z M32 32 H40 V37 H32 Z" fill="#dbe8f8" stroke="#5f85b8" strokeWidth="2" /></NavButton>
            </div>
          </nav>
        </div>
      </main>

      <footer className="shrink-0">
        <div className="flex h-12 bg-[#cbcbcb] pl-1">
          <div className="flex pt-3">
            {playback.map(p => (
              <button key={p.name} type="button" aria-label={p.name} className="flex h-6 w-[25px] items-center justify-center">
                <svg className="h-[14px] w-[13px]" viewBox="0 0 13 14"><path d={p.d} fill="#4d4d4d" stroke="#4d4d4d" /></svg>
              </button>
            ))}
          </div>
          <div className="ml-[13px] pt-[15px]">
            <div className="flex">
              {features.map(f => (
                <button key={f.name} type="button" aria-label={f.name} className="flex h-[20px] w-6 items-center justify-center">
                  <svg className="h-4 w-4" viewBox="0 0 48 48" fill="none" stroke="#333" strokeWidth="3">{f.art}</svg>
                </button>
              ))}
            </div>
            <svg className="h-3 w-[120px]" viewBox="0 0 120 12" fill="none"><path d="M15 7 H109 M36 7 V2 M60 7 V2 M84 7 V2 M108 7 V2" stroke="#666" strokeWidth="2" /><rect x="5.5" y="2.5" width="9" height="9" rx="1" fill="#d5dce8" stroke="#555" /><path d="M7.5 7 H12.5 M10 4.5 V9.5" stroke="#111" strokeWidth="1.5" /></svg>
          </div>
          <svg className="mt-[11px] -ml-1.5 h-8 w-3" viewBox="0 0 12 32"><path d="M0 0 H12 V4 L7 9 V32 H5 V9 L0 4 Z" fill="#636363" /></svg>
          <button type="button" aria-label="Preferences" className="mr-[9px] ml-auto">
            <svg className="h-4 w-4" viewBox="0 0 16 16" fill="none" stroke="#555"><circle cx="8" cy="8" r="5" strokeWidth="2" /><circle cx="8" cy="8" r="6.7" strokeWidth="2.4" strokeDasharray="2.6 2.66" /><circle cx="8" cy="8" r="2" fill="#555" stroke="none" /></svg>
          </button>
        </div>
        <div className="flex h-0.5 bg-[#1a1618] pl-[344px]"><span className="w-12 bg-[#555]" /></div>
      </footer>
    </div>
  )
}
